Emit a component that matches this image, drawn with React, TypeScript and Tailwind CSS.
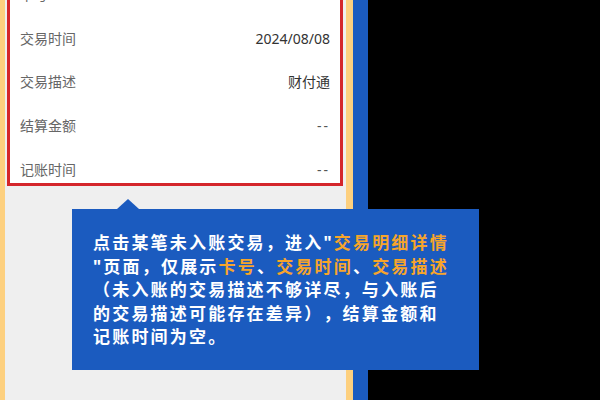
import type { ReactNode } from "react";

const ROWS: { label: string; value: string }[] = [
  { label: "卡号", value: "1234 **** 5678" },
  { label: "交易时间", value: "2024/08/08" },
  { label: "交易描述", value: "财付通" },
  { label: "结算金额", value: "--" },
  { label: "记账时间", value: "--" },
];

function Hi({ children }: { children: ReactNode }) {
  return <span className="text-[#f7a52b]">{children}</span>;
}

export default function App() {
  return (
    <div
      className="relative flex h-[400px] w-[600px] overflow-hidden bg-black"
      style={{ fontFamily: '"Noto Sans", "Noto Sans CJK SC", sans-serif' }}
    >
      {/* phone column */}
      <div className="flex h-full w-[353px] shrink-0 border-r-[7px] border-l-[5px] border-[#fdd07f] bg-[#efefef]">
        <div className="flex-1 pr-[3px] pl-[2px]">
          <div className="mt-[-28px] flex flex-col gap-[23.7px] border-[3px] border-[#d4262b] bg-white px-[10px] pt-[10px] pb-[3px]">
            {ROWS.map((row) => (
              <div
                key={row.label}
                className="flex h-[20px] items-center justify-between text-[14px] leading-[20px]"
              >
                <span className="text-[#666666]">{row.label}</span>
                <span
                  className={
                    row.value === "--"
                      ? "tracking-[2px] text-[#555555]"
                      : "text-[#333333]"
                  }
                >
                  {row.value}
                </span>
              </div>
            ))}
          </div>
        </div>
      </div>
      <div className="h-full w-[15px] shrink-0 bg-[#1b5bbf]" />
      <div className="flex-1 bg-black" />

      {/* callout */}
      <div className="absolute top-[209px] left-[72px] h-[161px] w-[407px] bg-[#1b5bbf] pt-[22px] pl-[21px]">
        <div className="absolute top-[-10px] left-[45px] h-0 w-0 border-r-[11px] border-b-[10px] border-l-[11px] border-r-transparent border-b-[#1b5bbf] border-l-transparent" />
        <div className="text-[17px] leading-[23.5px] font-bold tracking-[2.2px] whitespace-nowrap text-white [text-spacing-trim:space-all]">
          <div>
            点击某笔未入账交易，进入"<Hi>交易明细详情</Hi>
          </div>
          <div>
            "页面，仅展示<Hi>卡号</Hi>、<Hi>交易时间</Hi>、<Hi>交易描述</Hi>
          </div>
          <div>（未入账的交易描述不够详尽，与入账后</div>
          <div>的交易描述可能存在差异），结算金额和</div>
          <div>记账时间为空。</div>
        </div>
      </div>
    </div>
  );
}
